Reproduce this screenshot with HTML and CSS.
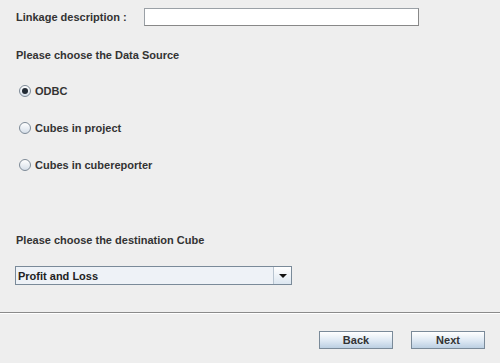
FILE: index.html
```html
<!DOCTYPE html>
<html>
<head>
<meta charset="utf-8">
<link rel="stylesheet" href="styles.css">
</head>
<body>
<div class="page">
  <div class="content">
    <div class="row-desc">
      <span class="label">Linkage description :</span>
      <span class="textfield"></span>
    </div>
    <div class="heading first">Please choose the Data Source</div>
    <div class="radios">
      <div class="radio-row"><span class="radio checked"></span><span class="label">ODBC</span></div>
      <div class="radio-row"><span class="radio"></span><span class="label">Cubes in project</span></div>
      <div class="radio-row"><span class="radio"></span><span class="label">Cubes in cubereporter</span></div>
    </div>
    <div class="heading second">Please choose the destination Cube</div>
    <div class="combo">
      <span class="combo-text">Profit and Loss</span>
      <span class="combo-btn"><span class="tri"></span></span>
    </div>
  </div>
  <div class="separator"></div>
  <div class="buttons">
    <span class="btn">Back</span>
    <span class="btn">Next</span>
  </div>
</div>
</body>
</html>
```
FILE: styles.css
```css
* { box-sizing: border-box; }
html, body { margin: 0; padding: 0; }
body {
  background: #eeeeee;
  font-family: "Liberation Sans", Arial, sans-serif;
  font-size: 11px;
  font-weight: bold;
  color: #333333;
  width: 500px;
  height: 363px;
  overflow: hidden;
}
.page { display: flex; flex-direction: column; height: 363px; }
.content { padding: 8px 0 0 16px; height: 312px; }
.row-desc { display: flex; align-items: center; height: 18px; }
.row-desc .label { width: 128px; }
.textfield {
  display: block;
  width: 275px;
  height: 18px;
  background: #ffffff;
  border: 1px solid #9aa0a6;
  box-shadow: inset 0 0 0 1px #ffffff;
  border-right-color: #888;
  border-bottom-color: #888;
}
.heading { line-height: 14px; }
.heading.first { margin-top: 22px; }
.radios { display: flex; flex-direction: column; gap: 23px; margin-top: 22px; margin-left: 3px; }
.radio-row { display: flex; align-items: center; height: 14px; }
.radio {
  display: inline-block;
  width: 12px;
  height: 12px;
  border-radius: 50%;
  border: 1px solid #7d8a97;
  background: linear-gradient(#ffffff, #d6dfe9);
  margin-right: 4px;
  position: relative;
}
.radio.checked::after {
  content: "";
  position: absolute;
  left: 2px; top: 2px;
  width: 6px; height: 6px;
  border-radius: 50%;
  background: #222a33;
}
.heading.second { margin-top: 61px; }
.combo {
  margin-top: 19px;
  margin-left: -1px;
  width: 277px;
  height: 19px;
  border: 1px solid #7a8a99;
  background: #eef2f7;
  display: flex;
  align-items: center;
}
.combo-text { flex: 1; padding-left: 2px; color: #222; }
.combo-btn {
  width: 18px;
  height: 17px;
  border-left: 1px solid #b8c4d0;
  background: linear-gradient(#ffffff, #dce6f0);
  display: flex;
  align-items: center;
  justify-content: center;
}
.tri {
  width: 0; height: 0;
  border-left: 4px solid transparent;
  border-right: 4px solid transparent;
  border-top: 4px solid #111;
}
.separator { height: 2px; border-top: 1px solid #8a8a8a; border-bottom: 1px solid #ffffff; }
.buttons { display: flex; justify-content: flex-end; gap: 18px; padding: 17px 15px 0 0; }
.btn {
  width: 74px;
  height: 18px;
  border: 1px solid #7a8a99;
  background: linear-gradient(#ffffff 0%, #dde8f3 55%, #bccfe2 100%);
  display: flex;
  align-items: center;
  justify-content: center;
  color: #333;
}
```
